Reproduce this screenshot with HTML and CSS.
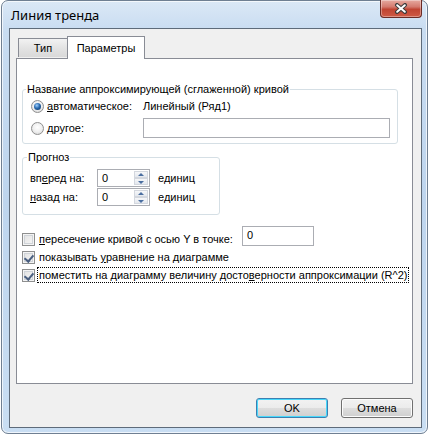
FILE: index.html
```html
<!DOCTYPE html>
<html lang="ru">
<head>
<meta charset="utf-8">
<title>Линия тренда</title>
<link rel="stylesheet" href="styles.css">
</head>
<body>
<div class="window">
  <div class="titlebar">
    <span class="title">Линия тренда</span>
    <div class="close">
      <svg width="14" height="11" viewBox="0 0 14 11"><path d="M3 2 L11 9 M11 2 L3 9" stroke="#3b3b3b" stroke-width="4" stroke-linecap="round"/><path d="M3.2 2.2 L10.8 8.8 M10.8 2.2 L3.2 8.8" stroke="#ffffff" stroke-width="2" stroke-linecap="round"/></svg>
    </div>
  </div>
  <div class="client">
    <div class="tabs">
      <div class="tab">Тип</div>
      <div class="tab active">Параметры</div>
    </div>
    <div class="panel">
      <fieldset class="group g1">
        <legend>Название аппроксимирующей (сглаженной) кривой</legend>
        <div class="grid">
          <label class="opt"><span class="radio on"></span><span><u>а</u>втоматическое:</span></label>
          <span class="val">Линейный (Ряд1)</span>
          <label class="opt"><span class="radio"></span><span><u>д</u>ругое:</span></label>
          <span class="input wide"></span>
        </div>
      </fieldset>
      <fieldset class="group g2">
        <legend>Прогноз</legend>
        <div class="frow">
          <span class="flabel">вп<u>е</u>ред на:</span>
          <span class="spin"><span class="num">0</span><span class="btns"><span class="sb up"></span><span class="sb down"></span></span></span>
          <span class="unit">единиц</span>
        </div>
        <div class="frow">
          <span class="flabel"><u>н</u>азад на:</span>
          <span class="spin"><span class="num">0</span><span class="btns"><span class="sb up"></span><span class="sb down"></span></span></span>
          <span class="unit">единиц</span>
        </div>
      </fieldset>
      <div class="checks">
        <div class="crow first">
          <span class="check"></span><span class="ctext"><u>п</u>ересечение кривой с осью Y в точке:</span>
          <span class="input small">0</span>
        </div>
        <div class="crow">
          <span class="check on"></span><span class="ctext">показывать <u>у</u>равнение на диаграмме</span>
        </div>
        <div class="crow">
          <span class="check on"></span><span class="ctext focus">поместить на диаграмму величину досто<u>в</u>ерности аппроксимации (R^2)</span>
        </div>
      </div>
    </div>
    <div class="buttons">
      <button class="btn default">OK</button>
      <button class="btn">Отмена</button>
    </div>
  </div>
</div>
</body>
</html>
```

FILE: styles.css
```css
* { box-sizing: border-box; }
html, body { margin: 0; padding: 0; }
body {
  width: 431px; height: 437px;
  background: #ffffff;
  font-family: "Liberation Sans", Arial, sans-serif;
  font-size: 11px;
  color: #000;
  overflow: hidden;
}
.window {
  margin-left: 1px;
  width: 427px;
  height: 434px;
  border: 1px solid #6f7f92;
  border-radius: 7px;
  background: linear-gradient(to bottom, #dbe8f6 0px, #c8dcf1 30px, #bed5ee 200px, #c9def3 434px);
  padding: 0 5px 5px 7px;
  display: flex;
  flex-direction: column;
  box-shadow: inset 0 0 0 1px rgba(255,255,255,0.7);
}
.titlebar {
  height: 27px;
  display: flex;
  align-items: flex-start;
  justify-content: space-between;
}
.title {
  font-family: "Noto Sans", "Open Sans", sans-serif;
  font-size: 13px;
  margin-top: 5px;
  margin-left: 2px;
  color: #000;
}
.close {
  width: 42px; height: 18px;
  margin-top: -1px;
  border: 1px solid #6b2b25;
  border-top: none;
  border-radius: 0 0 4px 4px;
  background: linear-gradient(to bottom, #e6aaa0 0%, #d47a6e 40%, #c04432 55%, #cf5a45 100%);
  display: flex; align-items: center; justify-content: center;
  box-shadow: inset 0 0 0 1px rgba(255,255,255,0.35);
}
.client {
  flex: 1;
  background: #f0f0f0;
  border: 1px solid #5e6b7a;
  padding: 7px 8px 0 6px;
  display: flex;
  flex-direction: column;
}
.tabs {
  display: flex;
  align-items: flex-end;
  height: 22px;
  padding-left: 2px;
  position: relative;
  z-index: 1;
}
.tab {
  height: 19px;
  width: 50px;
  border: 1px solid #898c95;
  border-bottom: none;
  background: linear-gradient(to bottom, #f2f2f2, #e3e3e3 50%, #d9d9d9);
  text-align: center;
  padding-top: 3px;
  margin-bottom: 1px;
}
.tab.active {
  width: 78px;
  height: 23px;
  background: #fff;
  margin-bottom: -1px;
  border-left: 1px solid #898c95;
  margin-left: -1px;
  padding-top: 5px;
}
.panel {
  height: 326px;
  background: #fff;
  border: 1px solid #898c95;
  padding: 0 0 0 5px;
}
.group {
  border: 1px solid #d5dfe5;
  border-radius: 3px;
  margin: 0;
  padding: 0;
  min-width: 0;
}
.group legend {
  padding: 0 1px;
  line-height: 13px;
  height: 13px;
}
.g1 {
  width: 376px;
  margin-top: 24px;
  padding: 0 0 5px 8px;
}
.g1 legend { margin-left: -5px; }
.grid {
  display: grid;
  grid-template-columns: 112px auto;
  row-gap: 2px;
  align-items: center;
}
.opt { display: flex; align-items: center; height: 20px; }
.radio {
  width: 13px; height: 13px;
  border-radius: 50%;
  border: 1px solid #8f8f8f;
  background: radial-gradient(circle at 50% 40%, #fff 0%, #f0f0f0 50%, #d0d0d0 100%);
  margin-right: 3px;
  position: relative;
  flex: none;
}
.radio.on::after {
  content: "";
  position: absolute;
  left: 2px; top: 2px; width: 7px; height: 7px;
  border-radius: 50%;
  background: radial-gradient(circle at 40% 35%, #9fd0ff 0%, #2a6bb0 45%, #0b2c55 100%);
}
.input {
  display: block;
  height: 20px;
  border: 1px solid #abadb3;
  background: #fff;
}
.wide { width: 247px; }
.g2 {
  width: 198px;
  margin-top: 7px;
  padding: 5px 0 8px 7px;
}
.g2 legend { margin-left: -3px; }
.frow {
  display: flex; align-items: center;
  height: 18px;
  margin-bottom: 1px;
}
.frow:last-child { margin-bottom: 0; }
.flabel { width: 67px; }
.spin {
  width: 53px; height: 18px;
  border: 1px solid #abadb3;
  background: #fff;
  display: flex; align-items: stretch;
}
.num { flex: 1; padding-left: 4px; line-height: 16px; }
.btns { width: 15px; display: flex; flex-direction: column; padding: 1px 1px 1px 0; }
.sb {
  flex: 1;
  border: 1px solid #d3d7de;
  background: linear-gradient(to bottom, #f6f7f9, #e4e8ee);
  position: relative;
}
.sb.up::after, .sb.down::after {
  content: ""; position: absolute; left: 3px; width: 0; height: 0;
  border-left: 3px solid transparent; border-right: 3px solid transparent;
}
.sb.up::after { top: 1px; border-bottom: 3px solid #4a6ea0; }
.sb.down::after { top: 2px; border-top: 3px solid #4a6ea0; }
.unit { margin-left: 8px; }
.checks { margin-top: 11px; }
.crow {
  display: flex; align-items: center;
  height: 18px;
}
.crow.first { height: 20px; margin-bottom: 2px; align-items: flex-end; }
.crow.first .input { align-self: flex-start; }
.check {
  width: 13px; height: 13px;
  border: 1px solid #8e8f8f;
  background: linear-gradient(135deg, #e0e0e0, #f8f8f8);
  box-shadow: inset 0 0 0 1px #f4f4f4, inset 0 0 0 2px #cfd3d8;
  margin-right: 3px;
  flex: none;
  position: relative;
}
.check.on::after {
  content: "";
  position: absolute;
  left: 3px; top: 1px; width: 4px; height: 7px;
  border-right: 2px solid #4a5f80;
  border-bottom: 2px solid #4a5f80;
  transform: rotate(40deg);
}
.ctext { padding: 1px 1px; }
.crow.first .ctext { padding: 0 1px; line-height: 13px; }
.focus { outline: 1px dotted #000; outline-offset: 0; }
.small { width: 72px; margin-left: 8px; padding-left: 4px; line-height: 17px; }
.buttons {
  display: flex; justify-content: flex-end;
  gap: 13px;
  margin-top: 14px;
}
.btn {
  width: 72px; height: 20px;
  font-family: "Liberation Sans", Arial, sans-serif;
  font-size: 11px;
  border: 1px solid #707070;
  border-radius: 3px;
  background: linear-gradient(to bottom, #f2f2f2 0%, #ebebeb 50%, #dddddd 51%, #cfcfcf 100%);
  box-shadow: inset 0 0 0 1px #fcfcfc;
  padding: 0;
  color: #000;
}
.btn.default {
  border-color: #3c7fb1;
  box-shadow: inset 0 0 0 1px #48d8fb;
}
```
